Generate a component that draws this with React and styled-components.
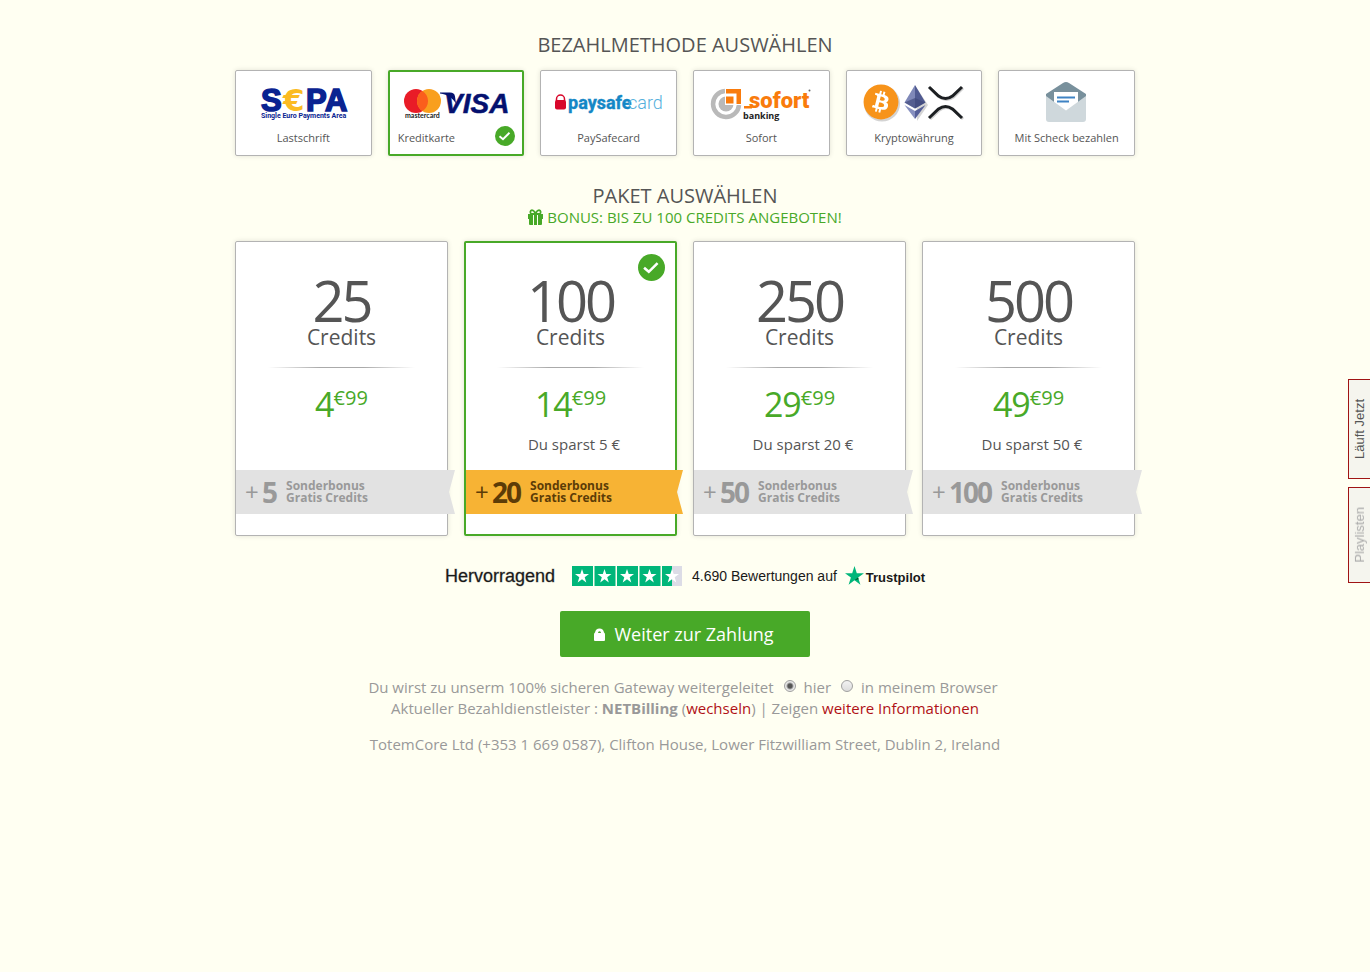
import React, { useState } from "react";
import styled, { createGlobalStyle, css } from "styled-components";
import { FaBitcoin } from "react-icons/fa";

const GREEN = "#48a928";
const DARK = "#555";
const ARIAL = '"Liberation Sans", Arial, sans-serif';

const GlobalStyle = createGlobalStyle`
  *, *::before, *::after { box-sizing: border-box; }
  body {
    margin: 0;
    background: #fffff2;
    color: #999;
    font-family: "Open Sans", "Noto Sans", sans-serif;
    font-size: 15px;
    line-height: 21px;
  }
  h2, p { margin: 0; }
  button { font-family: inherit; cursor: pointer; }
`;

const Page = styled.main`
  max-width: 932px;
  margin: 0 auto;
  padding: 33px 16px 40px;
  text-align: center;
`;

const Heading = styled.h2`
  color: ${DARK};
  font-size: 20px;
  font-weight: 400;
  line-height: 24px;
  text-transform: uppercase;
`;

const BonusLine = styled.p`
  display: flex;
  align-items: center;
  justify-content: center;
  gap: 4px;
  padding-bottom: 2px;
  color: ${GREEN};
  line-height: 18px;
  text-transform: uppercase;
`;

const CardGrid = styled.div`
  display: grid;
  grid-template-columns: repeat(${(p) => p.$columns}, 1fr);
  gap: 16px;
  margin: 13px 0 ${(p) => p.$after}px;
`;

const cardFrame = css`
  position: relative;
  display: flex;
  flex-direction: column;
  align-items: center;
  background: #fff;
  color: ${DARK};
  border-style: solid;
  border-width: ${(p) => (p.$selected ? 2 : 1)}px;
  border-color: ${(p) => (p.$selected ? GREEN : "#b3b3b3")};
  border-radius: 2px;
  box-shadow: 0 0 5px rgba(0, 0, 0, 0.12);
`;

const MethodCard = styled.button`
  ${cardFrame}
  min-height: 86px;
  padding: ${(p) => (p.$selected ? 6 : 7)}px 0 0;
`;

const MethodLogo = styled.svg`
  display: block;
  width: 120px;
  height: 50px;
`;

const MethodName = styled.span`
  align-self: ${(p) => (p.$selected ? "flex-start" : "center")};
  margin-left: ${(p) => (p.$selected ? 8 : 0)}px;
  font-size: 11px;
  line-height: 20px;
`;

const CheckMark = styled.svg`
  position: absolute;
  right: ${(p) => (p.$large ? 10 : 7)}px;
  ${(p) => (p.$large ? "top: 11px;" : "bottom: 8px;")}
  width: ${(p) => (p.$large ? 27 : 20)}px;
  height: ${(p) => (p.$large ? 27 : 20)}px;
`;

const PackageCard = styled.button`
  ${cardFrame}
  padding: ${(p) => (p.$selected ? "30px 0 20px" : "31px 0 21px")};
`;

const Amount = styled.span`
  font-size: 56px;
  line-height: 54px;
  letter-spacing: -3px;
`;

const Unit = styled.span`
  font-size: 21px;
  line-height: 20px;
`;

const Rule = styled.span`
  width: 70%;
  height: 1px;
  margin: 20px 0 16px;
  background: linear-gradient(90deg, transparent, #aaa 35%, #aaa 65%, transparent);
`;

const Price = styled.span`
  display: flex;
  align-items: flex-start;
  color: ${GREEN};
  font-size: 34px;
  line-height: 40px;
  letter-spacing: -1px;
`;

const Cents = styled.span`
  font-size: 20px;
  line-height: 28px;
  letter-spacing: 0;
`;

const Saving = styled.span`
  min-height: 20px;
  margin: 10px 0 16px;
  padding-left: 7px;
  font-size: 15px;
  line-height: 20px;
`;

const Ribbon = styled.span`
  display: flex;
  align-items: center;
  align-self: flex-start;
  width: calc(100% + 8px);
  height: 44px;
  padding-left: 9px;
  background: ${(p) => (p.$selected ? "#f7b334" : "#e2e2e2")};
  color: ${(p) => (p.$selected ? "#5c3c07" : "#999")};
  clip-path: polygon(0 0, 100% 0, calc(100% - 6px) 50%, 100% 100%, 0 100%);
`;

const Plus = styled.span`
  width: 17px;
  font-size: 24px;
  line-height: 42px;
  text-align: left;
`;

const BonusAmount = styled.span`
  font-size: 28px;
  font-weight: 700;
  line-height: 44px;
  letter-spacing: -2px;
`;

const BonusText = styled.span`
  margin-left: 10px;
  font-size: 12px;
  font-weight: 700;
  line-height: 12px;
  text-align: left;
`;

const TrustRow = styled.div`
  display: flex;
  align-items: center;
  justify-content: center;
  height: 20px;
  color: #191919;
  font-family: ${ARIAL};
`;

const TrustWord = styled.span`
  font-size: 18px;
  -webkit-text-stroke: 1px rgba(25, 25, 25, 0.3);
`;

const Stars = styled.svg`
  width: 110px;
  height: 20px;
  margin: 0 10px 0 17px;
`;

const ReviewCount = styled.span`
  margin-right: 8px;
  font-size: 14px;
`;

const TrustBrand = styled.a`
  display: flex;
  align-items: center;
  gap: 2px;
  color: inherit;
  font-size: 13px;
  font-weight: 700;
  line-height: 24px;
  text-decoration: none;

  span { padding-top: 4px; }
`;

const PayButton = styled.button`
  display: inline-flex;
  align-items: center;
  justify-content: center;
  gap: 9px;
  min-width: 250px;
  height: 46px;
  margin: 25px 0 20px;
  padding: 0 2px 0 0;
  border: 0;
  border-radius: 2px;
  background: ${GREEN};
  color: #fff;
  font-size: 18px;
  font-weight: 500;
  vertical-align: top;
`;

const Gateway = styled.div`
  display: flex;
  flex-wrap: wrap;
  justify-content: center;
  padding-right: 4px;
`;

const Option = styled.label`
  display: inline-flex;
  margin-left: 10px;
`;

const Radio = styled.input`
  appearance: none;
  width: 12px;
  height: 12px;
  margin: 3px 8px 0 0;
  border: 1px solid #a0a0a0;
  border-radius: 50%;
  background: linear-gradient(#f2f2f2, #dcdcdc);

  &:checked {
    background: radial-gradient(circle, #555 0 2px, #e8e8e8 4px);
  }
`;

const Link = styled.a`
  color: #b01116;
  text-decoration: none;
`;

const Address = styled.p`
  margin-top: 15px;
`;

const SideTabs = styled.nav`
  position: fixed;
  top: 379px;
  right: 0;
  display: flex;
  flex-direction: column;
  gap: 8px;
`;

const SideTab = styled.button`
  width: 22px;
  padding: 19px 0;
  border: 1px solid #a01414;
  border-right: 0;
  background: #f5f5ee;
  color: ${(p) => (p.$active ? "#555" : "#aaa")};
  font-family: ${ARIAL};
  font-size: 13px;
  line-height: 21px;

  span {
    display: block;
    writing-mode: vertical-rl;
    transform: rotate(180deg);
  }
`;

function Check({ large }) {
  return (
    <CheckMark $large={large} viewBox="0 0 20 20" aria-hidden="true">
      <circle cx="10" cy="10" r="10" fill={GREEN} />
      <path d="M4.500 10.200 8 13.200 14.500 6.800" fill="none" stroke="#fff" strokeWidth="1.900" />
    </CheckMark>
  );
}

const logos = {
  sepa: (
    <g fontFamily={ARIAL} fontWeight="700" fill="#0a2391">
      <text x="18" y="33" fontSize="31" stroke="#0a2391" strokeWidth="1.6">S</text>
      <text x="40" y="33" fontSize="31" fontFamily='"DejaVu Sans", sans-serif' fill="#fbbb21">€</text>
      <text x="63" y="33" fontSize="31" stroke="#0a2391" strokeWidth="1.6">P</text>
      <text x="82" y="33" fontSize="31" stroke="#0a2391" strokeWidth="1.6">A</text>
      <text x="18" y="40" fontSize="7" fontFamily="Roboto, sans-serif">Single Euro Payments Area</text>
    </g>
  ),
  card: (
    <g>
      <circle cx="20" cy="23" r="12" fill="#e91c27" />
      <circle cx="33" cy="23" r="12" fill="#f99f1e" />
      <path d="M26.500 12.900a12 12 0 0 1 0 20.200 12 12 0 0 1 0-20.200z" fill="#fb5e1c" />
      <text x="9" y="40" fontFamily="Lato, sans-serif" fontWeight="700" fontSize="7" fill="#222">mastercard</text>
      <path d="M44 14.500h10c3 0 4.500 1 5 4l1 7c-3-5-8-9-16-10z" fill="#04116f" />
      <text x="48" y="35" fontFamily={ARIAL} fontWeight="700" fontStyle="italic" fontSize="28" fill="#04116f" stroke="#04116f" strokeWidth=".5">VISA</text>
    </g>
  ),
  paysafe: (
    <g fontFamily="Roboto, sans-serif" fontSize="18">
      <path d="M7.500 23v-2a4 4 0 0 1 8 0v2" fill="none" stroke="#d8072b" strokeWidth="1.500" />
      <rect x="6" y="22" width="11" height="9.500" rx="2" fill="#d8072b" />
      <text x="19" y="31" fontWeight="700" fill="#1487c6" stroke="#1487c6" strokeWidth=".4">paysafe</text>
      <text x="79" y="31" fontWeight="300" fill="#55b0dc">card</text>
    </g>
  ),
  sofort: (
    <g>
      <path d="M24 13A13 13 0 1 0 38 27" fill="none" stroke="#b9b9b9" strokeWidth="4.500" />
      <circle cx="25" cy="26" r="7.500" fill="#b9b9b9" />
      <path d="M24 10h16v17H24z" fill="#fff" />
      <path d="M25 11h15v15h-4.500V15.500H25z" fill="#f97b0c" />
      <path d="M25 18.500h7.500v7H25z" fill="#f97b0c" />
      <path d="M43 28h8v2.500h-8z" fill="#f97b0c" />
      <text x="48" y="30" fontFamily="Roboto, sans-serif" fontWeight="900" fontSize="22" fill="#f97b0c">sofort</text>
      <circle cx="108.500" cy="12.500" r="1" fill="#666" />
      <text x="42" y="41" fontFamily='"Open Sans", sans-serif' fontWeight="700" fontSize="9" fill="#222">banking</text>
    </g>
  ),
  crypto: (
    <g>
      <circle cx="28" cy="25.500" r="18" fill="#d3d3d3" />
      <circle cx="27" cy="24" r="17" fill="#fff" />
      <FaBitcoin x="9" y="6" size={36} color="#f7931a" />
      <path d="M62 9l12 18-11 16z" fill="#d5d5d5" />
      <path d="M61 7 50.500 24.500 61 30.500z" fill="#7f88b8" />
      <path d="M61 7 71.500 24.500 61 30.500z" fill="#505a91" />
      <path d="M61 20 50.500 24.500 61 30.500 71.500 24.500z" fill="#3d4679" opacity=".65" />
      <path d="M50.500 27 61 33v8z" fill="#8790bf" />
      <path d="M71.500 27 61 33v8z" fill="#555f98" />
      <g fill="none" strokeWidth="3">
        <path d="M76 10l9.500 9q7 5 14 0l9.500-9M76 41l9.500-9q7-5 14 0l9.500 9" stroke="#cfcfcf" />
        <path d="M75 9l9.500 9q7 5 14 0l9.500-9M75 40l9.500-9q7-5 14 0l9.500 9" stroke="#1c1f22" />
      </g>
    </g>
  ),
  cheque: (
    <g transform="translate(-1 0)">
      <path d="M40 16 57 5q3-2 6 0l17 11v12H40z" fill="#78909c" />
      <path d="M48 14h24v18H48z" fill="#fff" />
      <path d="M51 19.500h18M51 23.500h12" stroke="#3f83c4" strokeWidth="2" />
      <path d="M40 18l20 14.500L80 18v23q0 3-3 3H43q-3 0-3-3z" fill="#cfd8dc" />
    </g>
  ),
};

const methods = [
  { id: "sepa", name: "Lastschrift" },
  { id: "card", name: "Kreditkarte" },
  { id: "paysafe", name: "PaySafecard" },
  { id: "sofort", name: "Sofort" },
  { id: "crypto", name: "Kryptowährung" },
  { id: "cheque", name: "Mit Scheck bezahlen" },
];

const packages = [
  { credits: 25, price: "4", saving: "", bonus: 5 },
  { credits: 100, price: "14", saving: "Du sparst 5 €", bonus: 20 },
  { credits: 250, price: "29", saving: "Du sparst 20 €", bonus: 50 },
  { credits: 500, price: "49", saving: "Du sparst 50 €", bonus: 100 },
];

const STAR = "M10 3l1.700 5.100h5.300l-4.300 3.200 1.600 5.200-4.300-3.200-4.300 3.200 1.600-5.200L3 8.100h5.300z";

export default function App() {
  const [method, setMethod] = useState("card");
  const [credits, setCredits] = useState(100);

  return (
    <>
      <GlobalStyle />
      <Page>
        <Heading>Bezahlmethode auswählen</Heading>
        <CardGrid $columns={6} $after={28}>
          {methods.map(({ id, name }) => {
            const selected = id === method;
            return (
              <MethodCard key={id} type="button" $selected={selected} aria-pressed={selected} onClick={() => setMethod(id)}>
                <MethodLogo viewBox="0 0 120 50" aria-hidden="true">{logos[id]}</MethodLogo>
                <MethodName $selected={selected}>{name}</MethodName>
                {selected && <Check />}
              </MethodCard>
            );
          })}
        </CardGrid>

        <Heading>Paket auswählen</Heading>
        <BonusLine>
          <svg width="15" height="16" viewBox="0 0 15 16" fill={GREEN} aria-hidden="true">
            <path d="M0 5h5v5H0zM10 5h5v5h-5zM1 10h4v6H2q-1 0-1-1zM10 10h4v5q0 1-1 1h-3zM6 5h3v11H6z" />
            <path d="M7 5H3.500A2 2 0 0 1 4 1.200C6 1.200 6.500 3 7.500 4.500 8.500 3 9 1.200 11 1.200A2 2 0 0 1 11.500 5z" fill="none" stroke={GREEN} strokeWidth="1.800" />
          </svg>
          Bonus: bis zu 100 Credits angeboten!
        </BonusLine>
        <CardGrid $columns={4} $after={30}>
          {packages.map((pack) => {
            const selected = pack.credits === credits;
            return (
              <PackageCard key={pack.credits} type="button" $selected={selected} aria-pressed={selected} onClick={() => setCredits(pack.credits)}>
                <Amount>{pack.credits}</Amount>
                <Unit>Credits</Unit>
                <Rule />
                <Price>
                  {pack.price}
                  <Cents>€99</Cents>
                </Price>
                <Saving>{pack.saving}</Saving>
                <Ribbon $selected={selected}>
                  <Plus>+</Plus>
                  <BonusAmount>{pack.bonus}</BonusAmount>
                  <BonusText>
                    Sonderbonus
                    <br />
                    Gratis Credits
                  </BonusText>
                </Ribbon>
                {selected && <Check large />}
              </PackageCard>
            );
          })}
        </CardGrid>

        <TrustRow>
          <TrustWord>Hervorragend</TrustWord>
          <Stars viewBox="0 0 110 20" role="img" aria-label="4,5 von 5 Sternen">
            {[0, 1, 2, 3, 4].map((i) => (
              <g key={i} transform={`translate(${i * 22.5} 0)`}>
                <rect width="21" height="20" fill={i === 4 ? "#dcdce6" : "#00b67a"} />
                {i === 4 && <rect width="10" height="20" fill="#00b67a" />}
                <path d={STAR} fill="#fff" />
              </g>
            ))}
          </Stars>
          <ReviewCount>4.690 Bewertungen auf</ReviewCount>
          <TrustBrand href="#trustpilot">
            <svg width="19" height="20" viewBox="0 0 19 20" aria-hidden="true">
              <path d="M9.500 0l2.300 7.200H19l-5.900 4.400 2.300 7.100-5.900-4.400-5.900 4.400 2.300-7.100L0 7.200h7.200z" fill="#00b67a" />
              <path d="M13.600 13.200l-.5-1.600-3.600 2.700z" fill="#005128" />
            </svg>
            <span>Trustpilot</span>
          </TrustBrand>
        </TrustRow>

        <PayButton type="button">
          <svg width="11" height="13" viewBox="0 0 11 13" aria-hidden="true">
            <path d="M1 13q-1 0-1-1V6.500Q0 5 1 4.500C1.500 2 3 .5 5.500 .5S9.500 2 10 4.500q1 .5 1 2V12q0 1-1 1z" fill="#fff" />
            <path d="M4 5a1.500 1.800 0 0 1 3 0z" fill={GREEN} />
          </svg>
          Weiter zur Zahlung
        </PayButton>

        <Gateway>
          Du wirst zu unserm 100% sicheren Gateway weitergeleitet
          <Option>
            <Radio type="radio" name="target" defaultChecked />
            hier
          </Option>
          <Option>
            <Radio type="radio" name="target" />
            in meinem Browser
          </Option>
        </Gateway>
        <p>
          Aktueller Bezahldienstleister : <b>NETBilling</b> (<Link href="#wechseln">wechseln</Link>) | Zeigen{" "}
          <Link href="#informationen">weitere Informationen</Link>
        </p>
        <Address>TotemCore Ltd (+353 1 669 0587), Clifton House, Lower Fitzwilliam Street, Dublin 2, Ireland</Address>
      </Page>

      <SideTabs>
        <SideTab type="button" $active>
          <span>Läuft Jetzt</span>
        </SideTab>
        <SideTab type="button">
          <span>Playlisten</span>
        </SideTab>
      </SideTabs>
    </>
  );
}
